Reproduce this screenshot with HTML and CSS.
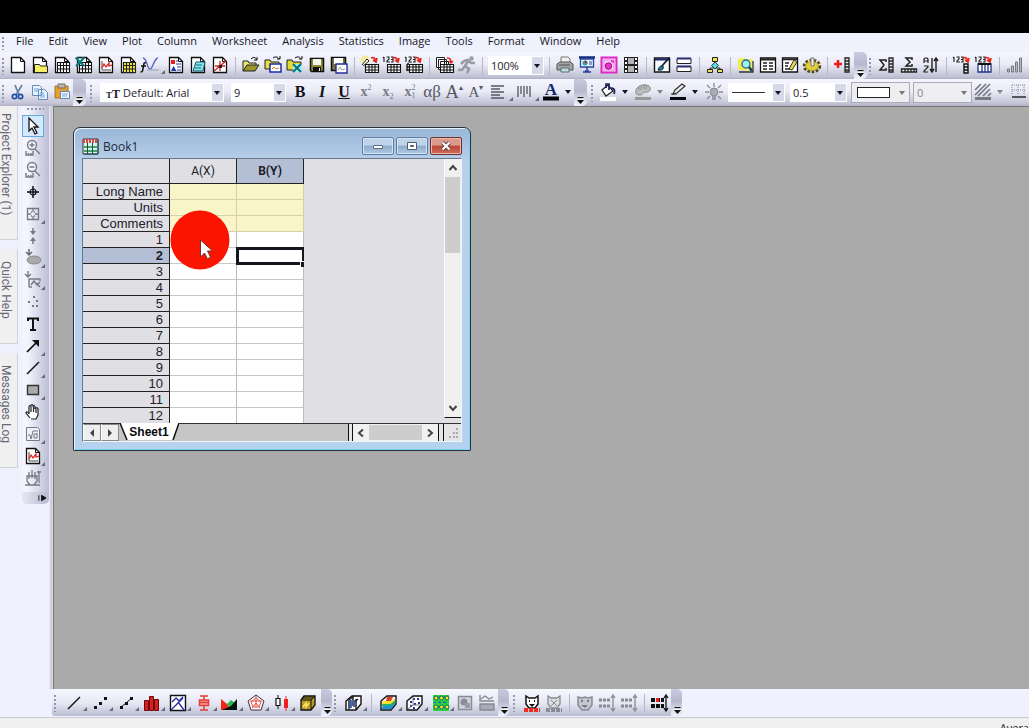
FILE: index.html
```html
<!DOCTYPE html>
<html lang="en">
<head>
<meta charset="utf-8">
<title>Book1</title>
<link rel="stylesheet" href="styles.css">
</head>
<body>
<svg class="sprite" aria-hidden="true">
<symbol id="page" viewBox="0 0 20 20"><path d="M3.5 2.5h9l4 4v11h-13z" fill="#fff" stroke="#111" stroke-width="1.3"/><path d="M12.5 2.5v4h4" fill="none" stroke="#111"/></symbol>
<symbol id="folderpage" viewBox="0 0 20 20"><use href="#page"/><path d="M4.500 9.500h5l1 1.500h7v6.500h-13z" fill="#f6ee62" stroke="#222"/></symbol>
<symbol id="grid" viewBox="0 0 20 20"><path d="M5.5 7.5h12v10h-12z" fill="#fff"/><path d="M5.5 7.5h12v10h-12zM5.5 10.5h12M5.5 14h12M8.5 7v11M11.5 7v11M14.5 7v11" fill="none" stroke="#111" stroke-width="1.1"/></symbol>
<symbol id="book" viewBox="0 0 20 20"><use href="#page"/><use href="#grid"/></symbol>
<symbol id="excel" viewBox="0 0 20 20"><use href="#page"/><use href="#grid"/><path d="M2 3l8 8M10 3l-8 8" stroke="#087c86" stroke-width="2.2"/><path d="M1 3h4M7 3h4" stroke="#087c86"/></symbol>
<symbol id="graph" viewBox="0 0 20 20"><use href="#page"/><path d="M6 6v9h9" fill="none" stroke="#444"/><path d="M6 13l2-4 2 3 3-4v3l3-1" fill="none" stroke="#e02525" stroke-width="1.3"/></symbol>
<symbol id="matrix" viewBox="0 0 20 20"><use href="#page"/><path d="M5 7h12v10H5z" fill="#f5e83c"/><path d="M5.5 7.5h12v10h-12zM5.5 10.5h12M5.5 14h12M8.5 7v11M11.5 7v11M14.5 7v11" fill="none" stroke="#222" stroke-width="1.1"/></symbol>
<symbol id="func" viewBox="0 0 20 20"><path d="M6 8c-2-1-2 0-2.500 3L2.500 16c0 1-1 1-2 1M1 11h5" fill="none" stroke="#111" stroke-width="1.5"/><path d="M3 3c4 0 4 11 7 11S14 3 18 3" fill="none" stroke="#4d5fc0" stroke-width="1.3"/><path d="M7 15h12" stroke="#999cab"/></symbol>
<symbol id="layout" viewBox="0 0 20 20"><use href="#page"/><path d="M5 5h4v4H5z" fill="#e42020"/><path d="M10 9h5M10 6h2M11 12h4M11 15h4" stroke="#223aaa"/><path d="M5 16l2.500-5 3 5z" fill="#1839a8"/></symbol>
<symbol id="notes" viewBox="0 0 20 20"><use href="#page"/><path d="M8 7h9l-2 9H5z" fill="#8ce5ea" stroke="#075967"/><path d="M8 10h6M7 13h6" stroke="#08717b"/></symbol>
<symbol id="digit" viewBox="0 0 20 20"><use href="#page"/><path d="M4 16L16 6M10 6v10M5 11h10" stroke="#cf2222" stroke-width="1.3"/><path d="M9 10h3v3H9z" fill="#222"/></symbol>
<symbol id="open" viewBox="0 0 20 20"><path d="M2 16V6h5l1 2h7v3" fill="#e9e177" stroke="#222"/><path d="M2 16l4-6h12l-4 6z" fill="#98962a" stroke="#222"/><path d="M10 4c3-3 5-1 6 1M16 2v3h-3" fill="none" stroke="#111"/></symbol>
<symbol id="opengraph" viewBox="0 0 20 20"><path d="M2 14V5h5l1 2h8v7z" fill="#e8de3f" stroke="#222"/><path d="M10 3c3-2 5-1 6 1M17 1v3h-3" fill="none" stroke="#111"/><path d="M7 9h11v8H7z" fill="#fff" stroke="#182bb0" stroke-width="1.5"/><path d="M9 14l2-2 2 2 3-1" fill="none" stroke="#d74"/></symbol>
<symbol id="openexcel" viewBox="0 0 20 20"><path d="M2 15V5h5l1 2h8v8z" fill="#e2d936" stroke="#222"/><path d="M10 3c3-2 5-1 6 1M17 1v3h-3" fill="none" stroke="#111"/><path d="M8 9h9v8H8z" fill="#a9eaf0"/><path d="M8 9l8 8M16 9l-8 8" stroke="#07717d" stroke-width="2"/></symbol>
<symbol id="save" viewBox="0 0 20 20"><path d="M3.5 3.5h13v13h-12l-1-1z" fill="#918c36" stroke="#111" stroke-width="1.5"/><path d="M6 4h8v6H6z" fill="#f7f7ef"/><path d="M6 12h8v5H6z" fill="#111"/><path d="M12 13h1v3h-1z" fill="#eee"/></symbol>
<symbol id="savegraph" viewBox="0 0 20 20"><path d="M2.5 2.5h14v13h-14z" fill="#77733a" stroke="#111" stroke-width="1.5"/><path d="M5 3h9v6H5z" fill="#fff"/><path d="M7 9h11v9H7z" fill="#fff" stroke="#232e96" stroke-width="1.4"/><path d="M9 15l2-3 2 3 3-1" fill="none" stroke="#999"/></symbol>
<symbol id="smallgrid" viewBox="0 0 20 20"><path d="M5.5 9.500h13v8h-13z" fill="#fff"/><path d="M5.5 9.5h13v8h-13zM5.5 12h13M5.500 15h13M9 9v9M12 9v9M15 9v9" fill="none" stroke="#111" stroke-width="1.1"/></symbol>
<symbol id="redarrow" viewBox="0 0 20 20"><path d="M11 3c3-1 4 0 5 3M13 5l3 2 1-4" fill="none" stroke="#e42a20" stroke-width="1.7"/></symbol>
<symbol id="imp1" viewBox="0 0 20 20"><circle cx="5" cy="5" r="4.5" fill="#f3eb9b"/><path d="M2 10l5-6 2 2-6 5" fill="#fff" stroke="#222"/><use href="#smallgrid"/><use href="#redarrow"/></symbol>
<symbol id="nums" viewBox="0 0 20 20"><path d="M2 2v5M1 3l1-1M4.500 2h2.500v2l-2 2v1h3M9 2h2v5H9M9 4.500h2" fill="none" stroke="#222" stroke-width="1.1"/></symbol>
<symbol id="imp2" viewBox="0 0 20 20"><use href="#nums"/><use href="#redarrow"/><use href="#smallgrid"/></symbol>
<symbol id="imp3" viewBox="0 0 20 20"><use href="#nums"/><use href="#redarrow"/><use href="#smallgrid"/><path d="M3 9v7M3 9h2M3 12h2M3 15h2" stroke="#111" stroke-width="1.3"/></symbol>
<symbol id="batch" viewBox="0 0 20 20"><path d="M1.500 2.500h8v10h-8zM3.500 4.500h8v10h-8zM5.500 6.500h8v10h-8z" fill="#fff" stroke="#222"/><use href="#smallgrid"/><path d="M12 3c4 0 4 2 4 5M14 6l2 2 2-2" stroke="#e42a20" fill="none" stroke-width="1.5"/></symbol>
<symbol id="run" viewBox="0 0 20 20"><circle cx="14.500" cy="3.500" r="2.200" fill="#999aa5"/><path d="M7 6l4-1 3 3h4M11 6L8 11l4 3-2 4M8 11l-3 4H1M7 6l-3 3" fill="none" stroke="#999aa5" stroke-width="2.6"/></symbol>
<symbol id="print" viewBox="0 0 20 20"><path d="M6 8V2h7l2 2v4" fill="#eee" stroke="#777"/><path d="M2 9l3-2h10l3 2v6H2z" fill="#a4a5a8" stroke="#555"/><path d="M6 13h8v4H6z" fill="#b9e4e7" stroke="#666"/><path d="M4 10h11" stroke="#555"/></symbol>
<symbol id="slide" viewBox="0 0 20 20"><path d="M2 2.500h16" stroke="#112a76" stroke-width="2.5"/><path d="M3.500 4h13v8h-13z" fill="#e8f7ff" stroke="#2744a0" stroke-width="1.3"/><path d="M10 12v3M6 17h8M8 16h4" stroke="#223c9a" stroke-width="1.5"/><circle cx="8" cy="8" r="2.500" fill="#20a9a7"/><path d="M8 5.500V8h2.500" stroke="#e44"/><path d="M12 7h3M12 9h3" stroke="#2744a0"/></symbol>
<symbol id="video" viewBox="0 0 20 20"><path d="M2.500 2.500h15v15h-15z" fill="#fbd3f5" stroke="#df27c8" stroke-width="2"/><path d="M5 5h10v10H5z" fill="none" stroke="#ed83df"/><circle cx="9.500" cy="11" r="3.200" fill="#e636ca" stroke="#9e078c"/><path d="M12 6l3 1" stroke="#e22dc4" stroke-width="2"/></symbol>
<symbol id="film" viewBox="0 0 20 20"><path d="M3 2h14v16H3z" fill="#222"/><path d="M7 3h6v6H7zM7 11h6v6H7z" fill="#b5b5b5"/><path d="M5 3v14M15 3v14" stroke="#fff" stroke-width="2" stroke-dasharray="2 2"/></symbol>
<symbol id="penwin" viewBox="0 0 20 20"><path d="M2.500 3h15v14h-15z" fill="#f9fcfe" stroke="#111" stroke-width="1.4"/><path d="M3 4.500h14" stroke="#182b73" stroke-width="2"/><path d="M9 12l8-9" stroke="#101f37" stroke-width="1.8"/><path d="M6 15c1-4 3-4 5-4 1 2 0 5-5 4z" fill="#238190" stroke="#101f37"/></symbol>
<symbol id="panes" viewBox="0 0 20 20"><path d="M3 3.500h14v5H3zM3 11.500h14v5H3z" fill="#fff" stroke="#222"/><path d="M3 3.500h14M3 11.500h14" stroke="#242f76" stroke-width="2"/></symbol>
<symbol id="flow" viewBox="0 0 20 20"><path d="M10 5v5M5 15v-2h10v2M10 10v3" fill="none" stroke="#222"/><path d="M7.500 2.500h5v4h-5z" fill="#f3e34f" stroke="#222"/><path d="M10 7l3.500 3.500L10 14l-3.500-3.500z" fill="#58d9df" stroke="#244"/><path d="M2.500 14.500h5v3h-5zM12.500 14.500h5v3h-5z" fill="#f3e34f" stroke="#222"/></symbol>
<symbol id="find" viewBox="0 0 20 20"><path d="M2 4l7-1v12H2z" fill="#f4ea50"/><path d="M9 4h8v12H9z" fill="#f4ed77"/><path d="M3 17h14V6" fill="none" stroke="#333" stroke-width="1.3"/><circle cx="10" cy="9" r="4" fill="#a7edf2" stroke="#127187" stroke-width="1.3"/><path d="M13 12l3 4" stroke="#163e60" stroke-width="2.5"/></symbol>
<symbol id="list" viewBox="0 0 20 20"><path d="M2.500 3h15v14h-15z" fill="#fff" stroke="#111" stroke-width="1.3"/><path d="M3 4.500h14" stroke="#222" stroke-width="2"/><path d="M5 8h4M11 8h4M5 11h4M11 11h4M5 14h4M11 14h4" stroke="#222" stroke-width="1.3"/></symbol>
<symbol id="script" viewBox="0 0 20 20"><path d="M2.500 3h15v14h-15z" fill="#fff" stroke="#111" stroke-width="1.3"/><path d="M3 4.500h14M5 8h4M5 11h3M5 14h5" stroke="#222" stroke-width="1.5"/><path d="M9 14l5-9 3 2-5 8z" fill="#f0d745" stroke="#333"/></symbol>
<symbol id="gear" viewBox="0 0 20 20"><ellipse cx="10" cy="11" rx="7.500" ry="5.500" fill="none" stroke="#4f4818" stroke-width="3.500" stroke-dasharray="2.500 1.500"/><ellipse cx="10" cy="11" rx="6.500" ry="4.500" fill="#e6cf3c" stroke="#b09c28"/><path d="M9 3h3v8H9z" fill="#eee" stroke="#777"/></symbol>
<symbol id="addcol" viewBox="0 0 20 20"><path d="M1 9h8M5 5v8" stroke="#ef1919" stroke-width="2.500"/><path d="M12 3h4v14h-4zM12 6h4M12 9h4M12 12h4M12 15h4" fill="#eee" stroke="#222" stroke-width="1.3"/></symbol>
<symbol id="sumcol" viewBox="0 0 20 20"><path d="M9 7V5H3l4 5-4 5h6v-2" fill="none" stroke="#222" stroke-width="1.5"/><path d="M12 3h4v14h-4zM12 6h4M12 9h4M12 12h4M12 15h4" fill="#eee" stroke="#222" stroke-width="1.3"/></symbol>
<symbol id="sumrow" viewBox="0 0 20 20"><path d="M13 5V3H7l4 4-4 4h6V9" fill="none" stroke="#222" stroke-width="1.5"/><path d="M2.500 14h15v3h-15zM6 14v3M9 14v3M12 14v3M15 14v3" fill="#eee" stroke="#222" stroke-width="1.3"/></symbol>
<symbol id="sort" viewBox="0 0 20 20"><path d="M3 8V4l1-1h2l1 1v4M3 6h4M3 11h4v1l-4 4v1h4" fill="none" stroke="#222" stroke-width="1.2"/><path d="M11 3v13M9 14l2 3 2-3M15 17V4M13 6l2-3 2 3" fill="none" stroke="#222" stroke-width="1.4"/></symbol>
<symbol id="setcol" viewBox="0 0 20 20"><use href="#nums"/><use href="#redarrow"/><path d="M12 9h4v9h-4zM12 12h4M12 15h4" fill="#eee" stroke="#111" stroke-width="1.4"/></symbol>
<symbol id="setcols" viewBox="0 0 20 20"><use href="#nums"/><use href="#redarrow"/><path d="M4 9h13v8H4zM8 9v8M11 9v8M14 9v8" fill="#fff" stroke="#24338b" stroke-width="1.3"/><path d="M4 9h13" stroke="#111" stroke-width="2"/></symbol>
<symbol id="bars" viewBox="0 0 20 20"><path d="M2.500 14h2v3h-2zM6.500 11h2v6h-2zM10.500 7h2v10h-2zM14.500 3h2v14h-2z" fill="#bbb" stroke="#777985"/></symbol>
<symbol id="cut" viewBox="0 0 20 20"><path d="M7 3l4 10M14 3L8 13" stroke="#6882a4" stroke-width="1.7"/><circle cx="6.500" cy="14.500" r="2.200" fill="none" stroke="#244ea4" stroke-width="1.7"/><circle cx="12.500" cy="14.500" r="2.200" fill="none" stroke="#244ea4" stroke-width="1.7"/></symbol>
<symbol id="copy" viewBox="0 0 20 20"><path d="M2.500 3.500h7l2 2v8h-9zM8.500 7.500h6l3 3v7h-9z" fill="#eaf4ff" stroke="#6688ba"/><path d="M4 7h5M4 9h4M10 11h4M10 13h5M10 15h5" stroke="#70a7dc"/></symbol>
<symbol id="paste" viewBox="0 0 20 20"><path d="M3 4h13v12H3z" fill="#e0a034" stroke="#a37835"/><path d="M6 2h7v4H6z" fill="#bdb6aa" stroke="#776c62"/><path d="M8.500 9.500h9v7h-9z" fill="#eef5ff" stroke="#6884ad"/><path d="M10 12h6M10 14h5" stroke="#78a3d0"/></symbol>
<symbol id="align" viewBox="0 0 20 20"><path d="M3 4h13M3 7h9M3 10h13M3 13h9M3 16h13" stroke="#555762" stroke-width="1.5"/></symbol>
<symbol id="vbars" viewBox="0 0 20 20"><path d="M4 4v11M7 4v8M10 4v11M13 4v8M16 4v11" stroke="#666873" stroke-width="1.5"/></symbol>
<symbol id="bucket" viewBox="0 0 20 20"><path d="M4 8l6-5 5 6-7 5z" fill="#fff" stroke="#222" stroke-width="1.3"/><path d="M8 6V2h3v6M13 6c4 0 4 3 3 6" fill="none" stroke="#172359" stroke-width="1.7"/><path d="M2 15h16v4H2z" fill="#fff"/></symbol>
<symbol id="palette" viewBox="0 0 20 20"><path d="M3 9c0-5 8-8 13-5 4 4-1 7-4 6-2 0-2 3-5 3S2 12 3 9z" fill="#bbb" stroke="#8b8d98"/><circle cx="7" cy="6" r="1.400" fill="#ddd" stroke="#888"/><circle cx="12" cy="5" r="1.400" fill="#ddd" stroke="#888"/><path d="M2 15h16v3H2z" fill="#999"/></symbol>
<symbol id="pen" viewBox="0 0 20 20"><path d="M5 12l2-4 7-6 3 2-8 7z" fill="#eee" stroke="#333" stroke-width="1.2"/><path d="M3 12h6" stroke="#333"/><path d="M2 15h16v3H2z" fill="#080812"/></symbol>
<symbol id="bulb" viewBox="0 0 20 20"><circle cx="10" cy="10" r="4" fill="#aaabb4" stroke="#888a96"/><path d="M10 1v4M3 3l3 3M17 3l-3 3M1 10h4M15 10h4M3 17l3-3M17 17l-3-3M8 15h4M8 17h4" stroke="#888a96" stroke-width="1.3"/></symbol>
<symbol id="hatch" viewBox="0 0 20 20"><path d="M2 8l6-6M2 13L13 2M5 14L17 2M10 14l7-7M15 14l3-3" stroke="#777984" stroke-width="1.7"/><path d="M2 15h16v3H2z" fill="#777984"/></symbol>
<symbol id="border" viewBox="0 0 20 20"><path d="M3 3h14M3 8h14M3 3v10M9 3v10M15 3v10" stroke="#888a96" stroke-dasharray="1 1"/><path d="M3 15h14" stroke="#555" stroke-width="2"/></symbol>
<symbol id="fontcolor" viewBox="0 0 20 20"><path d="M2 14.500h16v4H2z" fill="#05050c"/></symbol>
<symbol id="pointer" viewBox="0 0 20 20"><path d="M6 2v13l3-3 3 6 2-1-3-6h4z" fill="#fff" stroke="#111" stroke-width="1.3"/></symbol>
<symbol id="zoomin" viewBox="0 0 20 20"><circle cx="9" cy="7" r="4.500" fill="#f5f6ff" stroke="#777984" stroke-width="1.4"/><path d="M12 11l5 5M9 4.500v5M6.500 7h5M3 13v4h7v-4M5.500 17v-2M8 17v-2" fill="none" stroke="#777984" stroke-width="1.4"/></symbol>
<symbol id="zoomout" viewBox="0 0 20 20"><circle cx="9" cy="7" r="4.500" fill="#f5f6ff" stroke="#777984" stroke-width="1.4"/><path d="M12 11l5 5M6.500 7h5M3 13v4h7v-4M5.500 17v-2M8 17v-2" fill="none" stroke="#777984" stroke-width="1.4"/></symbol>
<symbol id="cross" viewBox="0 0 20 20"><circle cx="10" cy="10" r="3" fill="none" stroke="#111" stroke-width="1.2"/><path d="M10 4v12M4 10h12" stroke="#111" stroke-width="1.5"/></symbol>
<symbol id="target" viewBox="0 0 20 20"><path d="M4.500 4.500h11v11h-11zM10 5v3M10 12v3M5 10h3M12 10h3M8 8h1M11 8h1M8 12h1M11 12h1" fill="none" stroke="#777984" stroke-width="1.3"/></symbol>
<symbol id="vdata" viewBox="0 0 20 20"><path d="M10 2v5M10 18v-5" stroke="#777984" stroke-width="1.5"/><path d="M7 5h6l-3 4zM7 15h6l-3-4z" fill="#777984"/></symbol>
<symbol id="ellip" viewBox="0 0 20 20"><path d="M6 1v6M3 4l3 3 3-3" fill="none" stroke="#666874" stroke-width="1.5"/><ellipse cx="11" cy="12" rx="7" ry="4" fill="#aaa" stroke="#888"/></symbol>
<symbol id="mask" viewBox="0 0 20 20"><path d="M5 1v6M2 4l3 3 3-3M6 17V9h11v2M8 15l3-4 3 4 3-3M13 13l4 4M6 17h3" fill="none" stroke="#777984" stroke-width="1.4"/></symbol>
<symbol id="dots" viewBox="0 0 20 20"><path d="M5 9h2v2H5zM10 4h2v2h-2zM13 8h2v2h-2zM9 13h2v2H9zM13 13h2v2h-2z" fill="#777984"/></symbol>
<symbol id="text" viewBox="0 0 20 20"><path d="M5 7V4.500h10V7M10 5v11M7 16h6" fill="none" stroke="#111" stroke-width="2"/></symbol>
<symbol id="arrow" viewBox="0 0 20 20"><path d="M4 16L13 7" stroke="#111" stroke-width="1.7"/><path d="M9 4h7v7z" fill="#111"/></symbol>
<symbol id="line" viewBox="0 0 20 20"><path d="M4 16L16 4" stroke="#111" stroke-width="1.5"/></symbol>
<symbol id="rect" viewBox="0 0 20 20"><path d="M4.500 5.500h11v9h-11z" fill="#aaa" stroke="#333" stroke-width="1.4"/></symbol>
<symbol id="hand" viewBox="0 0 20 20"><path d="M7 16l-4-5c0-2 2-1 3 1V5c0-2 2-2 2 0V4c0-2 2-2 2 0v1c0-2 2-2 2 0v2c1-2 3-1 3 0v6l-2 4H8M8 5v5M10.500 5v5M13 7v4" fill="#fff" stroke="#222" stroke-width="1.2"/></symbol>
<symbol id="formula" viewBox="0 0 20 20"><path d="M3.500 3.500h11l2 2v11h-13z" fill="#eceef8" stroke="#777984"/><path d="M5 11h2l1 4 2-8h5M14 10h-3v4h3v-5" fill="none" stroke="#777984"/></symbol>
<symbol id="rescale" viewBox="0 0 20 20"><path d="M6 4v7M9 2v8M12 4v7M4 8h10v5l-3 4H7l-3-4zM16 3v12M14 4h4M2 17h15" fill="none" stroke="#777984" stroke-width="1.3"/></symbol>
<symbol id="scatter" viewBox="0 0 20 20"><path d="M4 13h3v3H4zM9 9h3v3H9zM14 4h3v3h-3z" fill="#111"/></symbol>
<symbol id="linesym" viewBox="0 0 20 20"><path d="M4 15L16 5" stroke="#111"/><use href="#scatter"/></symbol>
<symbol id="columns" viewBox="0 0 20 20"><path d="M2.500 7.500h4v10h-4zM7.500 3.500h4v14h-4zM12.500 6.500h4v11h-4z" fill="#d82020" stroke="#6e0909"/></symbol>
<symbol id="multi" viewBox="0 0 20 20"><path d="M2.500 2.500h15v15h-15z" fill="#fff" stroke="#111" stroke-width="1.4"/><path d="M4 9l4-4 3 3 4-4M3 17l12-12M10 9l6 8" stroke="#222dac" stroke-width="1.3" fill="none"/></symbol>
<symbol id="box" viewBox="0 0 20 20"><path d="M6 3h8M10 3v14M6 17h8" fill="none" stroke="#e33b36" stroke-width="1.5"/><path d="M5.500 7h9v5.500h-9zM5.500 9.500h9" fill="#f6a29d" stroke="#e33b36" stroke-width="1.5"/></symbol>
<symbol id="area" viewBox="0 0 20 20"><path d="M1 17V6l6 5 4 6z" fill="#f22618"/><path d="M7 11l4-4 4 3-5 5z" fill="#23b94b"/><path d="M2 17h15V6l-6 7z" fill="#08100b"/></symbol>
<symbol id="radar" viewBox="0 0 20 20"><path d="M10 2l8 6-3 9H5L2 8z" fill="#fff" stroke="#333"/><path d="M10 3v11M4 8h12M6 15l4-5 4 5M10 5l5 4-2 5H7L5 9z" fill="none" stroke="#ec514b"/></symbol>
<symbol id="candle" viewBox="0 0 20 20"><path d="M6 2v14" stroke="#111"/><path d="M4 5.500h4v7H4z" fill="#fff" stroke="#111" stroke-width="1.2"/><path d="M14 3v15" stroke="#e22"/><path d="M12 6h4v9h-4z" fill="#ed2020"/></symbol>
<symbol id="template" viewBox="0 0 20 20"><path d="M3 7l3-4h11v9l-4 5H3z" fill="#b79a29" stroke="#111" stroke-width="1.3"/><path d="M3 7h10v9M13 7l4-4M5 5h10" fill="none" stroke="#111"/><path d="M5 14l3-4v4l3-4" fill="none" stroke="#f9e95f" stroke-width="1.5"/></symbol>
<symbol id="cube" viewBox="0 0 20 20"><path d="M2 8l6-5h9v8l-5 6H2z" fill="#fff" stroke="#111" stroke-width="1.4"/></symbol>
<symbol id="cube1" viewBox="0 0 20 20"><use href="#cube"/><path d="M5 7v9M9 4v9M12 6v10M5 7l5-4M9 10l5-4" stroke="#222" stroke-width="1.5"/><path d="M7 7v8M10 7v7" stroke="#4964bb" stroke-width="2"/></symbol>
<symbol id="surface" viewBox="0 0 20 20"><use href="#cube"/><path d="M4 11l8-1 4-3v4l-4 5H3z" fill="#1791dd"/><path d="M4 8h9l3-3v3l-4 3H3z" fill="#f3df2e"/><path d="M8 4h6l-2 4H7z" fill="#e53d23"/><path d="M3 12h9l4-4" stroke="#2bb849" stroke-width="1.5" fill="none"/></symbol>
<symbol id="cube2" viewBox="0 0 20 20"><use href="#cube"/><path d="M5 9h2M8 6h2M12 6h2M5 13h2M9 11h2M13 10h2M8 15h2" stroke="#2732a2" stroke-width="2"/><path d="M8 4v8h8M8 12l-5 4" fill="none" stroke="#777"/></symbol>
<symbol id="contour" viewBox="0 0 20 20"><path d="M2 2h16v16H2z" fill="#2bcf45"/><g fill="#f5e332" stroke="#087840"><circle cx="5" cy="5" r="2"/><circle cx="10.500" cy="5" r="2"/><circle cx="16" cy="5" r="2"/><circle cx="5" cy="14" r="2"/><circle cx="10.500" cy="14" r="2"/><circle cx="16" cy="14" r="2"/></g><path d="M3 9.500h14M8 3v14M13 3v14" stroke="#2254d0" stroke-dasharray="2 3"/></symbol>
<symbol id="image" viewBox="0 0 20 20"><path d="M3.500 3.500h13v13h-13z" fill="#d1d3de" stroke="#898b97" stroke-width="1.5"/><circle cx="9" cy="9" r="3.500" fill="#8b8d99"/><path d="M10 10h5v5h-5z" fill="#999ba6"/></symbol>
<symbol id="profile" viewBox="0 0 20 20"><path d="M3 2v6h14M4 6l4-3 4 3 4-2" fill="none" stroke="#858792" stroke-width="1.3"/><path d="M3 11h14v6H3z" fill="#aaabb6" stroke="#858792" stroke-width="1.3"/></symbol>
<symbol id="bear" viewBox="0 0 20 20"><path d="M4 3l3 2h6l3-2v8l-3 4H7l-3-4z" fill="#fff" stroke="#111" stroke-width="1.5"/><path d="M7 7h1v2H7zM12 7h1v2h-1zM7 11h6l-3 3z" fill="#111"/><path d="M2 17h16" stroke="#ee2a21" stroke-width="4" stroke-dasharray="4 1"/></symbol>
<symbol id="bearg" viewBox="0 0 20 20"><path d="M4 3l3 2h6l3-2v8l-3 4H7l-3-4z" fill="#ddd" stroke="#888a95" stroke-width="1.3"/><path d="M7 7l6 6M13 7l-6 6" stroke="#888a95"/><path d="M2 17h16" stroke="#888a95" stroke-width="4" stroke-dasharray="4 1"/></symbol>
<symbol id="maskg" viewBox="0 0 20 20"><path d="M3 4l4 1 3-1 3 1 4-1v8l-4 5H7l-4-5z" fill="#c4c6d0" stroke="#888a95" stroke-width="1.5"/><path d="M6 7h2v2H6zM12 7h2v2h-2zM6 12h7l-3 3z" fill="#777984"/></symbol>
<symbol id="range" viewBox="0 0 20 20"><path d="M2 7h12M2 13h12" stroke="#888a95" stroke-width="3" stroke-dasharray="3 1"/><path d="M16 3v14M14 5l2-3 2 3M14 15l2 3 2-3" fill="none" stroke="#888a95" stroke-width="1.3"/></symbol>
<symbol id="rangec" viewBox="0 0 20 20"><path d="M1 7h13M1 13h13" stroke="#111" stroke-width="4" stroke-dasharray="4 1"/><path d="M6 7h3" stroke="#e22" stroke-width="4"/><path d="M16 3v14M14 5l2-3 2 3M14 15l2 3 2-3" fill="none" stroke="#111" stroke-width="1.3"/></symbol>
<symbol id="more" viewBox="0 0 12 26"><path d="M3 18h6" stroke="#fff" stroke-width="4"/><path d="M3 17.500h6" stroke="#111" stroke-width="1.4"/><path d="M2.500 20h7L6 24z" fill="#111"/></symbol>
</svg>
<div class="app">
<div class="band"></div>
<nav class="menu"><span class="grip"></span><button>File</button><button>Edit</button><button>View</button><button>Plot</button><button>Column</button><button>Worksheet</button><button>Analysis</button><button>Statistics</button><button>Image</button><button>Tools</button><button>Format</button><button>Window</button><button>Help</button></nav>
<div class="bar">
<span class="grip"></span>
<button class="tb" aria-label="New project"><svg><use href="#page"/></svg></button><button class="tb" aria-label="New folder"><svg><use href="#folderpage"/></svg></button><button class="tb" aria-label="New workbook"><svg><use href="#book"/></svg></button><button class="tb" aria-label="New Excel"><svg><use href="#excel"/></svg></button><button class="tb" aria-label="New graph"><svg><use href="#graph"/></svg></button><button class="tb" aria-label="New matrix"><svg><use href="#matrix"/></svg></button><button class="tb wide corner" aria-label="New function"><svg><use href="#func"/></svg></button><button class="tb" aria-label="New layout"><svg><use href="#layout"/></svg></button><button class="tb" aria-label="New notes"><svg><use href="#notes"/></svg></button><button class="tb" aria-label="Digitize"><svg><use href="#digit"/></svg></button>
<span class="sep"></span>
<button class="tb" aria-label="Open"><svg><use href="#open"/></svg></button><button class="tb" aria-label="Open template"><svg><use href="#opengraph"/></svg></button><button class="tb" aria-label="Open Excel"><svg><use href="#openexcel"/></svg></button><button class="tb" aria-label="Save"><svg><use href="#save"/></svg></button><button class="tb" aria-label="Save template"><svg><use href="#savegraph"/></svg></button>
<span class="sep"></span>
<button class="tb" aria-label="Import wizard"><svg><use href="#imp1"/></svg></button><button class="tb" aria-label="Import ASCII"><svg><use href="#imp2"/></svg></button><button class="tb" aria-label="Import multiple"><svg><use href="#imp3"/></svg></button>
<span class="sep"></span>
<button class="tb" aria-label="Batch processing"><svg><use href="#batch"/></svg></button><button class="tb" aria-label="Run"><svg><use href="#run"/></svg></button>
<span class="sep"></span>
<span class="combo zoomc"><select aria-label="Zoom"><option>100%</option></select></span>
<span class="sep"></span>
<button class="tb" aria-label="Print"><svg><use href="#print"/></svg></button><button class="tb" aria-label="Slide show"><svg><use href="#slide"/></svg></button><button class="tb" aria-label="Send graphs"><svg><use href="#video"/></svg></button><button class="tb" aria-label="Video"><svg><use href="#film"/></svg></button>
<span class="sep"></span>
<button class="tb" aria-label="Custom routine"><svg><use href="#penwin"/></svg></button><button class="tb" aria-label="Split"><svg><use href="#panes"/></svg></button>
<span class="sep"></span>
<button class="tb" aria-label="Project explorer"><svg><use href="#flow"/></svg></button>
<span class="sep"></span>
<button class="tb" aria-label="Find"><svg><use href="#find"/></svg></button><button class="tb" aria-label="Results log"><svg><use href="#list"/></svg></button><button class="tb" aria-label="Script window"><svg><use href="#script"/></svg></button><button class="tb" aria-label="Code builder"><svg><use href="#gear"/></svg></button>
<span class="sep"></span>
<button class="tb" aria-label="Add column"><svg><use href="#addcol"/></svg></button>
<button class="more" aria-label="More"><svg><use href="#more"/></svg></button><span class="grip"></span>
<button class="tb" aria-label="Column statistics"><svg><use href="#sumcol"/></svg></button><button class="tb" aria-label="Row statistics"><svg><use href="#sumrow"/></svg></button><button class="tb" aria-label="Sort"><svg><use href="#sort"/></svg></button>
<span class="sep"></span>
<button class="tb" aria-label="Set values"><svg><use href="#setcol"/></svg></button><button class="tb" aria-label="Set all values"><svg><use href="#setcols"/></svg></button>
<span class="sep"></span>
<button class="tb" aria-label="Histogram"><svg><use href="#bars"/></svg></button><button class="tb" aria-label="Chart"><svg><use href="#bars"/></svg></button>
</div>
<div class="bar">
<span class="grip"></span>
<button class="tb" aria-label="Cut"><svg><use href="#cut"/></svg></button><button class="tb" aria-label="Copy"><svg><use href="#copy"/></svg></button><button class="tb" aria-label="Paste"><svg><use href="#paste"/></svg></button>
<button class="more" aria-label="More"><svg><use href="#more"/></svg></button><span class="grip second"></span>
<span class="combo fontc"><b class="tt"><i>T</i>T</b><select aria-label="Font"><option>Default: Arial</option></select></span>
<span class="combo sizec"><select aria-label="Font size"><option>9</option></select></span>
<button class="tb glyph heavy">B</button><button class="tb glyph heavy ital">I</button><button class="tb glyph heavy under">U</button><button class="tb glyph soft">x<sup>2</sup></button><button class="tb glyph soft">x<sub>2</sub></button><button class="tb glyph soft">x<span class="stack"><span>2</span><span>1</span></span></button><button class="tb glyph greek">αβ</button><button class="tb glyph big">A<sup>▴</sup></button><button class="tb glyph smaller">A<sup>▾</sup></button>
<button class="tb wide corner" aria-label="Align"><svg><use href="#align"/></svg></button><button class="tb wide corner" aria-label="Text direction"><svg><use href="#vbars"/></svg></button>
<button class="tb split" aria-label="Font color"><span class="inkwell"><svg><use href="#fontcolor"/></svg><span>A</span></span></button>
<button class="more" aria-label="More"><svg><use href="#more"/></svg></button><span class="grip third"></span>
<button class="tb split" aria-label="Fill color"><svg><use href="#bucket"/></svg></button><button class="tb split dim" aria-label="Palette"><svg><use href="#palette"/></svg></button><button class="tb split" aria-label="Line color"><svg><use href="#pen"/></svg></button><button class="tb" aria-label="Lighting"><svg><use href="#bulb"/></svg></button>
<span class="combo stylec"><span class="stroke"></span><select aria-label="Line style"><option></option></select></span>
<span class="combo stylec"><select aria-label="Line width"><option>0.5</option></select></span>
<span class="combo stylec off"><span class="swatch"></span><select aria-label="Border style"><option></option></select></span>
<span class="combo stylec off"><select aria-label="Pattern width"><option>0</option></select></span>
<button class="tb split dim" aria-label="Pattern"><svg><use href="#hatch"/></svg></button><button class="tb" aria-label="Border"><svg><use href="#border"/></svg></button>
</div>
<div class="main">
<aside class="tabs"><button>Project Explorer (1)</button><button>Quick Help</button><button>Messages Log</button></aside>
<div class="side">
<div class="tools"><span class="hgrip"></span>
<button class="tool on" aria-label="Pointer"><svg><use href="#pointer"/></svg></button><button class="tool" aria-label="Zoom in"><svg><use href="#zoomin"/></svg></button><button class="tool" aria-label="Zoom out"><svg><use href="#zoomout"/></svg></button><button class="tool" aria-label="Screen reader"><svg><use href="#cross"/></svg></button><button class="tool corner" aria-label="Data reader"><svg><use href="#target"/></svg></button><button class="tool" aria-label="Data selector"><svg><use href="#vdata"/></svg></button><button class="tool corner" aria-label="Selection"><svg><use href="#ellip"/></svg></button><button class="tool corner" aria-label="Mask"><svg><use href="#mask"/></svg></button><button class="tool" aria-label="Draw data"><svg><use href="#dots"/></svg></button><button class="tool" aria-label="Text"><svg><use href="#text"/></svg></button><button class="tool corner" aria-label="Arrow"><svg><use href="#arrow"/></svg></button><button class="tool corner" aria-label="Line"><svg><use href="#line"/></svg></button><button class="tool corner" aria-label="Rectangle"><svg><use href="#rect"/></svg></button><button class="tool" aria-label="Pan"><svg><use href="#hand"/></svg></button><button class="tool corner" aria-label="Equation"><svg><use href="#formula"/></svg></button><button class="tool corner" aria-label="Insert graph"><svg><use href="#graph"/></svg></button><button class="tool" aria-label="Rescale"><svg><use href="#rescale"/></svg></button>
</div><button class="toolmore" aria-label="More tools"><svg viewBox="0 0 10 8"><path d="M1 1v6M4 1l5 3-5 3z" fill="#111" stroke="#111"/></svg></button>
</div>
<main class="work">
<section class="win">
<header><svg class="bookicon" viewBox="0 0 17 17"><path d="M1 1h15v15H1z" fill="#d9f2ec" stroke="#333"/><path d="M1 3h15" stroke="#d4494b" stroke-width="4" stroke-dasharray="2 1"/><path d="M2 9h13M2 13h13" stroke="#49a469" stroke-width="2"/><path d="M5.500 5v11M10.500 5v11M16 2v14H2" fill="none" stroke="#244e55"/></svg><h1>Book1</h1>
<div class="ctl"><button aria-label="Minimize"><svg viewBox="0 0 20 12"><path d="M5.500 5.500h9v3h-9z" fill="#fff" stroke="#5a6b80"/></svg></button><button aria-label="Maximize"><svg viewBox="0 0 20 12"><path d="M5.500 2.500h9v7h-9zM8.500 5.500h3v1h-3z" fill="#fff" stroke="#4f5d70"/></svg></button><button class="close" aria-label="Close"><svg viewBox="0 0 20 12"><path d="M6.500 2.500l7 7M13.500 2.500l-7 7" stroke="#5d4543" stroke-width="4"/><path d="M6.500 2.500l7 7M13.500 2.500l-7 7" stroke="#fff" stroke-width="2.200"/></svg></button></div></header>
<div class="pane">
<div class="view">
<div class="sheet"><table>
<thead><tr><th class="rowhead"></th><th class="cola">A(X)</th><th class="sel">B(Y)</th></tr></thead>
<tbody>
<tr class="meta"><th>Long Name</th><td></td><td></td></tr><tr class="meta"><th>Units</th><td></td><td></td></tr><tr class="meta"><th>Comments</th><td></td><td></td></tr>
<tr><th>1</th><td></td><td></td></tr><tr><th class="sel">2</th><td></td><td class="active"></td></tr><tr><th>3</th><td></td><td></td></tr><tr><th>4</th><td></td><td></td></tr><tr><th>5</th><td></td><td></td></tr><tr><th>6</th><td></td><td></td></tr><tr><th>7</th><td></td><td></td></tr><tr><th>8</th><td></td><td></td></tr><tr><th>9</th><td></td><td></td></tr><tr><th>10</th><td></td><td></td></tr><tr><th>11</th><td></td><td></td></tr><tr><th>12</th><td></td><td></td></tr>
</tbody></table></div>
<div class="vscroll"><button aria-label="Scroll up"><svg viewBox="0 0 10 10"><path d="M1.500 7L5 3l3.500 4" fill="none" stroke="#444" stroke-width="2"/></svg></button><div class="thumb"></div><button aria-label="Scroll down"><svg viewBox="0 0 10 10"><path d="M1.500 3L5 7l3.500-4" fill="none" stroke="#444" stroke-width="2"/></svg></button></div>
</div>
<div class="foot"><button class="nav" aria-label="Previous sheet"><svg viewBox="0 0 10 10"><path d="M7 1v8L3 5z" fill="#444"/></svg></button><button class="nav" aria-label="Next sheet"><svg viewBox="0 0 10 10"><path d="M3 1v8l4-4z" fill="#444"/></svg></button>
<div class="strip"><button class="sheettab"><svg viewBox="0 0 60 18" preserveAspectRatio="none"><path d="M1 0l7 17h46l6-17z" fill="#fff"/><path d="M1 0l7 17M54 17l6-17" stroke="#111" stroke-width="1.500"/></svg><span>Sheet1</span></button></div>
<div class="hscroll"><button aria-label="Scroll left"><svg viewBox="0 0 10 10"><path d="M7 1.500L3 5l4 3.500" fill="none" stroke="#444" stroke-width="2"/></svg></button><div class="hthumb"></div><button aria-label="Scroll right"><svg viewBox="0 0 10 10"><path d="M3 1.500L7 5l-4 3.500" fill="none" stroke="#444" stroke-width="2"/></svg></button></div>
<div class="sizegrip"><svg viewBox="0 0 12 12"><path d="M9 2h2M6 6h2M9 6h2M2 10h2M6 10h2M9 10h2" stroke="#aaa" stroke-width="2"/></svg></div></div>
</div>
</section>
<div class="spot"><svg viewBox="0 0 60 60"><circle cx="30" cy="30" r="29.500" fill="#fb1500"/><path d="M30.500 30v17l4-4 3 6 3-2-3-6h5z" fill="#fff" stroke="#70332e"/></svg></div>
</main>
</div>
<div class="bottom">
<div class="dock"><span class="grip"></span>
<button class="tb xl corner" aria-label="Line plot"><svg><use href="#line"/></svg></button><button class="tb xl corner" aria-label="Scatter"><svg><use href="#scatter"/></svg></button><button class="tb xl corner" aria-label="Line and symbol"><svg><use href="#linesym"/></svg></button><button class="tb xl corner" aria-label="Column plot"><svg><use href="#columns"/></svg></button><button class="tb xl corner" aria-label="Multi panel"><svg><use href="#multi"/></svg></button><button class="tb xl corner" aria-label="Box chart"><svg><use href="#box"/></svg></button><button class="tb xl corner" aria-label="Area"><svg><use href="#area"/></svg></button><button class="tb xl corner" aria-label="Radar"><svg><use href="#radar"/></svg></button><button class="tb xl corner" aria-label="Stock"><svg><use href="#candle"/></svg></button><button class="tb xl" aria-label="Template library"><svg><use href="#template"/></svg></button>
<button class="more" aria-label="More"><svg><use href="#more"/></svg></button><span class="grip"></span>
<button class="tb xl corner" aria-label="3D bars"><svg><use href="#cube1"/></svg></button><span class="sep"></span><button class="tb xl corner" aria-label="3D surface"><svg><use href="#surface"/></svg></button><button class="tb xl corner" aria-label="3D scatter"><svg><use href="#cube2"/></svg></button><button class="tb xl corner" aria-label="Contour"><svg><use href="#contour"/></svg></button><button class="tb" aria-label="Image plot"><svg><use href="#image"/></svg></button><button class="tb" aria-label="Profiles"><svg><use href="#profile"/></svg></button>
<button class="more" aria-label="More"><svg><use href="#more"/></svg></button><span class="grip late"></span>
<button class="tb" aria-label="Mask range"><svg><use href="#bear"/></svg></button><button class="tb" aria-label="Unmask range"><svg><use href="#bearg"/></svg></button><span class="sep"></span><button class="tb" aria-label="Change mask color"><svg><use href="#maskg"/></svg></button><button class="tb" aria-label="Hide masked"><svg><use href="#range"/></svg></button><button class="tb" aria-label="Swap mask"><svg><use href="#range"/></svg></button><span class="sep"></span><button class="tb" aria-label="Enable masking"><svg><use href="#rangec"/></svg></button>
<button class="more" aria-label="More"><svg><use href="#more"/></svg></button></div>
</div>
<footer class="status"><span>Avera</span></footer>
</div>
</body>
</html>
```

FILE: styles.css
```css
* { box-sizing: border-box; }
body { margin: 0; background: #eff0fe; color: #1c1c28; font: 12px/16px "Open Sans", "Noto Sans", sans-serif; }
button { margin: 0; padding: 0; border: 0; background: none; color: inherit; font: inherit; }
svg { display: block; flex: none; }
.sprite { position: absolute; width: 0; height: 0; }
.app { display: flex; flex-direction: column; height: 100vh; overflow: hidden; }
.band { height: 33px; flex: none; background: #000; }
.menu { display: flex; align-items: center; height: 19px; flex: none; gap: 15px; overflow: hidden; background: #eff1fd; font-size: 11px; line-height: 14px; color: #16161f; }
.menu .grip { width: 7px; height: 14px; margin-right: -6px; }
.menu button { white-space: nowrap; flex: none; padding-bottom: 4px; }
.grip { flex: none; width: 9px; height: 18px; background: radial-gradient(circle, #9697aa 1px, transparent 1px) 0 0 / 6px 4px repeat-y; }
.bar { display: flex; align-items: center; height: 27px; flex: none; overflow: hidden; background: linear-gradient(#f4f5fe, #eaebf6 45%, #c0c2d4 92%, #b0b1c4); white-space: nowrap; }
.bar > .grip:first-child { width: 7px; }
.bar .second { margin: 0 3px 0 2px; }
.bar .third { margin-left: 2px; }
.tb { display: flex; align-items: center; justify-content: center; position: relative; flex: none; width: 22px; height: 24px; }
.tb svg { width: 20px; height: 20px; }
.bar .tb { padding-bottom: 1px; }
.wide { width: 26px; }
.wide svg { margin-right: 4px; }
.xl { width: 26px; }
.corner::after { content: ""; position: absolute; right: 0; bottom: 4px; border: 2px solid transparent; border-right-color: #666876; border-bottom-color: #666876; }
.split { width: 35px; justify-content: flex-start; }
.split::after { content: ""; margin-left: 4px; border: 3px solid transparent; border-top: 4px solid #191925; border-bottom: 0; }
.split.dim::after { border-top-color: #83858f; }
.sep { flex: none; width: 9px; height: 18px; background: linear-gradient(#b4b5c5, #b4b5c5) center / 1px 18px no-repeat; }
.more { flex: none; align-self: stretch; width: 13px; background: linear-gradient(#c9cade, #b6b8ce 45%, #eceef9 95%); border-radius: 0 5px 5px 0; }
.more svg { width: 13px; height: 26px; }
.combo { display: flex; position: relative; align-items: center; flex: none; height: 19px; background: #fff; }
.combo select { appearance: none; border: 0; background: none; flex: 1; min-width: 0; height: 19px; margin: 0; padding: 0 12px 0 3px; color: #22222d; font: 11px/17px "Open Sans", "Noto Sans", sans-serif; border-radius: 0; }
.combo::after { content: ""; position: absolute; right: 1px; top: 1px; bottom: 1px; width: 11px; background: #d7d9e8; }
.combo::before { content: ""; position: absolute; z-index: 1; right: 4px; top: 8px; border: 3px solid transparent; border-top: 4px solid #151520; border-bottom: 0; }
.zoomc { width: 56px; margin: 0 1px; }
.fontc { width: 124px; margin-right: 7px; }
.sizec { width: 55px; margin-right: 3px; }
.stylec { width: 57px; margin: 0 2px 0 3px; }
.off { background: #eeeef2; outline: 1px solid #a9abb8; }
.off::after { background: #eeeef2; }
.off::before { border-top-color: #777; }
.off select { color: #888; }
.tt { margin: 4px 0 0 6px; font: bold 12px/14px "Liberation Serif", serif; }
.tt i { font-size: 9px; font-style: normal; }
.stroke { position: absolute; left: 4px; width: 33px; height: 1px; background: #333; }
.swatch { position: absolute; left: 5px; width: 33px; height: 11px; border: 1px solid #222; background: #fff; }
.glyph { font: bold 15px/20px "Liberation Serif", serif; color: #101018; }
.heavy { font-size: 16px; }
.ital { font-style: italic; }
.under { text-decoration: underline; }
.soft, .greek, .big, .smaller { color: #777985; font-weight: normal; }
.soft { font-size: 14px; font-weight: bold; }
.glyph sup, .glyph sub { font-size: 8px; line-height: 8px; font-weight: normal; }
.glyph sup { align-self: flex-start; margin-top: 3px; }
.glyph sub { align-self: flex-end; margin-bottom: 3px; }
.stack { display: flex; flex-direction: column; font: 8px/8px "Liberation Serif", serif; }
.greek { font-size: 17px; color: #555762; }
.big { font-size: 19px; color: #555762; }
.smaller { color: #555762; }
.inkwell { position: relative; display: flex; justify-content: center; margin-left: 2px; }
.inkwell span { position: absolute; top: -1px; color: #15286f; font: bold 17px/18px "Liberation Serif", serif; }
.main { display: flex; flex: 1; min-height: 0; }
.tabs { display: flex; flex-direction: column; flex: none; width: 18px; gap: 9px; }
.tabs button { display: flex; align-items: center; writing-mode: vertical-rl; width: 18px; padding: 7px 5px 24px 0; white-space: nowrap; background: #f0f0f1; border: 1px solid #cfd1db; border-left: 0; border-top: 0; color: #686873; font: 12px/12px Roboto, sans-serif; }
.tabs button + button { padding-top: 12px; }
.side { display: flex; flex-direction: column; flex: none; width: 35px; padding-left: 4px; border-right: 1px solid #d8d9e4; background: linear-gradient(90deg, #eff1fe 90%, #bfc1d2); }
.tools { display: flex; flex-direction: column; width: 27px; padding: 0 2px 3px 0; background: linear-gradient(90deg, #f3f4fe 20%, #bbbed4); }
.hgrip { align-self: center; width: 18px; height: 9px; background: radial-gradient(circle, #9697aa 1px, transparent 1px) 0 0 / 4px 6px repeat-x; }
.tool { display: flex; align-items: center; justify-content: center; position: relative; width: 22px; height: 22px; }
.tool svg { width: 20px; height: 20px; }
.tool.corner::after { right: -1px; bottom: 1px; }
.tool.on { border: 1px solid #65a8dc; background: #d5e8fb; }
.toolmore { display: flex; justify-content: flex-end; align-items: center; width: 27px; height: 12px; padding-right: 2px; background: linear-gradient(90deg, #e4e6f2, #b7bad0); border-radius: 0 0 5px 5px; }
.toolmore svg { width: 9px; height: 8px; }
.work { position: relative; flex: 1; min-width: 0; overflow: hidden; border: 1px solid #777; border-right: 0; border-bottom: 0; background: #aaa; }
.win { position: absolute; left: 19px; top: 20px; width: 398px; padding: 1px 8px 8px; border: 1px solid #28323d; border-radius: 7px 7px 1px 1px; background: linear-gradient(#9bb6d7, #b9d1eb 35px, #b8d2ec 100px, #b5d2ee); box-shadow: inset 1px 1px #e8f4ff, inset -1px -1px #75d4ef; }
.win header { display: flex; align-items: center; height: 29px; }
.bookicon { width: 17px; height: 17px; margin: 5px 4px 0 0; }
h1 { flex: 1; margin: 6px 0 0; font: 12px/16px "Open Sans", sans-serif; color: #1d2a3a; }
.ctl { display: flex; gap: 2px; margin-top: 5px; }
.ctl button { display: flex; align-items: center; justify-content: center; width: 32px; height: 18px; border: 1px solid #5f7c9e; border-radius: 2px; background: linear-gradient(#bed2e8 45%, #8daaca 50%, #afcae4); box-shadow: inset 0 0 0 1px #d4e6f8; }
.ctl svg { width: 20px; height: 12px; }
.ctl .close { border-color: #6c302e; background: linear-gradient(#dc9a8d 45%, #bd4534 50%, #ce6f5c); box-shadow: inset 0 0 0 1px #e9b8af; }
.pane { border: 1px solid #697789; border-right-color: #f1f6fb; border-bottom-color: #f1f6fb; background: #e0dfe4; }
.view { display: flex; justify-content: space-between; height: 264px; }
.sheet { overflow: hidden; }
table { border-collapse: separate; border-spacing: 0; table-layout: fixed; width: 221px; font: 13px/15px "Liberation Sans", Arial, sans-serif; color: #20202a; }
th { height: 16px; padding: 0 6px 0 0; border-right: 1px solid #222; border-bottom: 1px solid #222; background: #e0dfe4; text-align: right; font-weight: normal; }
.rowhead { width: 87px; }
.cola { width: 67px; }
thead th { height: 25px; padding: 0; text-align: center; font-size: 12px; font-family: Roboto, sans-serif; }
td { height: 16px; padding: 0; border-right: 1px solid #bbb; border-bottom: 1px solid #c8c8c8; background: #fff; }
.meta td { background: #faf5c9; border-color: #d3d0ad; }
th.sel { background: #b4bfd5; font-weight: bold; }
.active { outline: 3px solid #16161f; outline-offset: -2px; position: relative; }
.active::after { content: ""; position: absolute; right: -3px; bottom: -4px; width: 5px; height: 5px; border: 1px solid #fff; border-width: 1px 0 0 1px; background: #16161f; }
.vscroll { display: flex; flex-direction: column; width: 17px; border-left: 1px solid #fafafa; border-bottom: 1px solid #111; background: #f0f0f0; margin-bottom: 5px; }
.vscroll button { display: flex; align-items: center; justify-content: center; height: 18px; }
.vscroll svg, .hscroll svg, .nav svg { width: 10px; height: 10px; }
.thumb { height: 76px; margin-right: 1px; background: #cdcdcd; }
.vscroll button:last-child { margin-top: auto; }
.foot { display: flex; height: 18px; border-top: 1px solid #333; background: #e5e5e8; }
.nav { display: flex; align-items: center; justify-content: center; width: 18px; background: #eee; border: 1px solid #888; border-left-color: #fff; }
.strip { width: 230px; border-right: 1px solid #111; background: #c6c6c6; }
.sheettab { position: relative; display: flex; align-items: center; justify-content: center; width: 60px; height: 17px; color: #080810; font: bold 12px/17px "Liberation Sans", Arial, sans-serif; }
.sheettab svg { position: absolute; width: 60px; height: 18px; top: -1px; left: 0; }
.sheettab span { position: relative; }
.hscroll { display: flex; align-items: center; justify-content: space-between; flex: 1; margin-left: 3px; border: solid #111; border-width: 0 1px; background: #f1f1f1; }
.hscroll button { display: flex; align-items: center; justify-content: center; width: 16px; height: 16px; }
.hthumb { flex: 1; height: 15px; background: #cdcdcd; }
.sizegrip { display: flex; align-items: end; justify-content: center; width: 18px; margin-left: 4px; border-left: 1px solid #111; }
.sizegrip svg { width: 12px; height: 12px; margin-bottom: 2px; }
.spot { position: absolute; left: 116px; top: 103px; width: 60px; height: 60px; }
.bottom { display: flex; flex: none; height: 29px; padding-left: 52px; background: #eff1fe; border-bottom: 1px solid #ccc; }
.dock { display: flex; align-items: center; height: 27px; background: linear-gradient(#f7f8ff, #e4e6f3 55%, #b9bcd1); border-radius: 3px 5px 5px 3px; }
.dock .more { width: 11px; }
.dock .late { margin: 0 1px 0 2px; }
.status { height: 10px; flex: none; display: flex; justify-content: flex-end; overflow: hidden; background: #f0f0f0; font-size: 11px; line-height: 16px; }
.status span { padding: 2px 0 0; flex: none; }
```
